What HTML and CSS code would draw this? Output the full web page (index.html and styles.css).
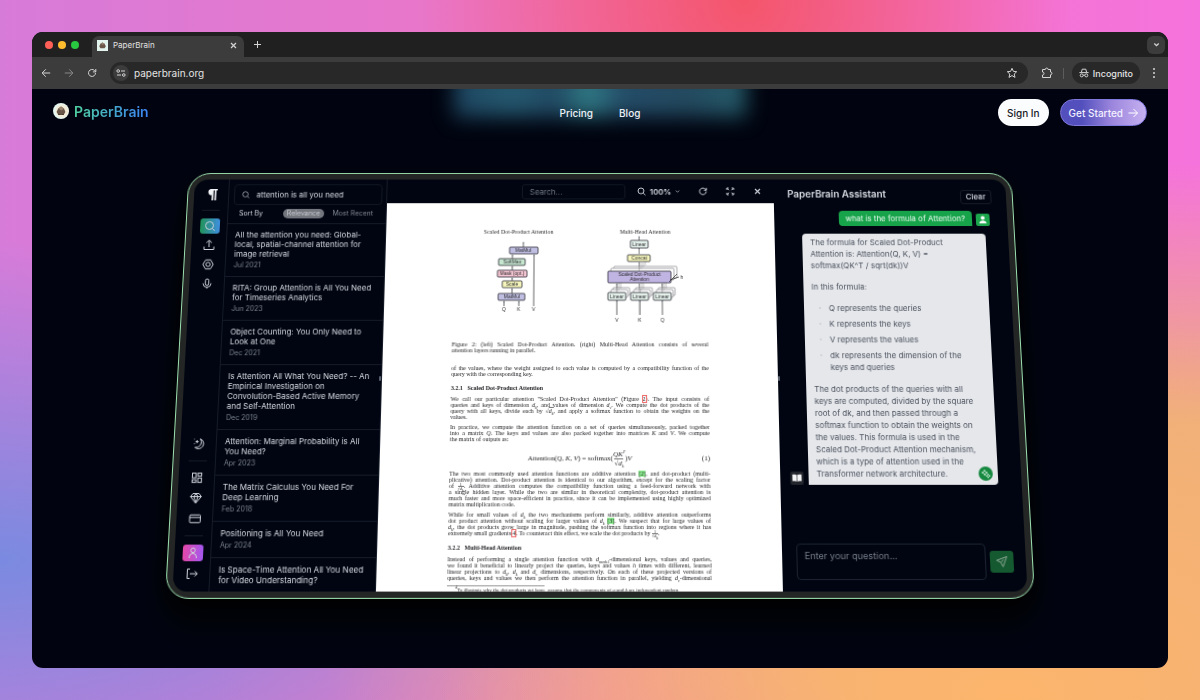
FILE: index.html
```html
<!DOCTYPE html>
<html lang="en">
<head>
    <meta charset="UTF-8">
    <meta name="viewport" content="width=device-width, initial-scale=1.0">
    <title>PaperBrain</title>
    <link rel="stylesheet" href="styles.css">
</head>
<body>
    <div class="browser">
        <!-- Tab strip -->
        <div class="tab-strip">
            <div class="lights"><i class="red"></i><i class="yellow"></i><i class="green"></i></div>
            <div class="tab">
                <svg class="favicon" viewBox="0 0 11 11"><rect width="11" height="11" fill="#e3f4ef"/><path d="M2.3 6.2 3.6 3.6 5.5 2.4 7.6 3.8 8.8 6.2 7.6 8.3H3.4z" fill="#6b5548"/><path d="M3.6 3.6 5.5 2.4 7.6 3.8 5.6 5z" fill="#94806d"/></svg>
                <span>PaperBrain</span>
                <button class="plain" aria-label="Close tab"><svg width="7" height="7" viewBox="0 0 7 7"><path d="M1 1l5 5M6 1L1 6" stroke-width="1.2"/></svg></button>
            </div>
            <button class="plain new-tab" aria-label="New tab"><svg width="9" height="9" viewBox="0 0 9 9"><path d="M4.500 1v7M1 4.500h7"/></svg></button>
            <button class="tab-search" aria-label="Search tabs"><svg width="7" height="7" viewBox="0 0 7 7"><path d="M1.300 2.500l2.200 2.200 2.200-2.200" stroke-width="1.300"/></svg></button>
        </div>

        <!-- Address bar -->
        <div class="toolbar">
            <button class="plain" aria-label="Back"><svg width="10" height="10" viewBox="0 0 10 10"><path d="M9.200 5H1.200M4.800 1.300L1.100 5l3.700 3.700"/></svg></button>
            <button class="plain dim" aria-label="Forward"><svg width="10" height="10" viewBox="0 0 10 10"><path d="M.8 5h8M5.200 1.300L8.900 5 5.200 8.700"/></svg></button>
            <button class="plain" aria-label="Reload"><svg width="10" height="10" viewBox="0 0 10 10"><path d="M8.500 5a3.500 3.500 0 1 1-1-2.500L8.700 3.700M8.800 1v2.900H5.900"/></svg></button>
            <div class="omnibox">
                <button class="site-info" aria-label="Site information"><svg width="10" height="8" viewBox="0 0 10 8"><circle cx="2.200" cy="2" r="1.300"/><path d="M5 2h4M1 6h4"/><circle cx="7.800" cy="6" r="1.300"/></svg></button>
                <input type="text" value="paperbrain.org" aria-label="Address">
                <button class="plain" aria-label="Bookmark"><svg width="12" height="12" viewBox="0 0 12 12"><path d="M6 1.300l1.400 3.100 3.300.3-2.500 2.300.8 3.400L6 8.600l-3 1.800.8-3.400L1.300 4.700l3.300-.3z"/></svg></button>
            </div>
            <button class="plain ext" aria-label="Extensions"><svg width="12" height="12" viewBox="0 0 12 12"><path d="M1.500 2.500h2.800a1.400 1.400 0 0 1 2.800 0h2.400V5a1.400 1.400 0 0 1 0 2.800v2.700h-8V8a1.500 1.500 0 0 0 0-3z"/></svg></button>
            <span class="bar"></span>
            <div class="incognito">
                <svg width="10" height="10" viewBox="0 0 10 10"><path d="M2.500 4L3.200 1.200h3.600L7.500 4M.4 4.600h9.200"/><circle cx="2.700" cy="7.400" r="1.500"/><circle cx="7.300" cy="7.400" r="1.500"/><path d="M4.200 7.200h1.600"/></svg>
                Incognito
            </div>
            <button class="plain" aria-label="Menu"><svg width="10" height="12" viewBox="0 0 10 12"><g fill="#d4d4d4" stroke="none"><circle cx="5" cy="2" r="1"/><circle cx="5" cy="6" r="1"/><circle cx="5" cy="10" r="1"/></g></svg></button>
        </div>

        <!-- Site -->
        <div class="page">
            <div class="glow"></div>
            <nav class="site-nav">
                <a class="brand" href="#">
                    <svg width="16" height="16" viewBox="0 0 16 16"><circle cx="8" cy="8" r="8" fill="#e6f6f0"/><circle cx="9" cy="8" r="6.500" fill="#f3ecd9"/><path d="M3.600 9l1.600-3.600L8 3.600l3 1.800L12.400 9l-1.800 3H5.400z" fill="#6a5549"/><path d="M5.200 5.400L8 3.600l3 1.800-2.600 2z" fill="#98846f"/><path d="M5 10.200l3 1.800 3-1.400-.4 1.400H5.400z" fill="#453730"/></svg>
                    <span>PaperBrain</span>
                </a>
                <div class="nav-links"><a href="#">Pricing</a><a href="#">Blog</a></div>
                <div class="nav-actions">
                    <button class="sign-in">Sign In</button>
                    <button class="get-started">Get Started <svg width="10" height="10" viewBox="0 0 10 10"><path d="M.5 5h9M5.500 1l4 4-4 4"/></svg></button>
                </div>
            </nav>

            <div class="stage">
                <div class="card">
                    <div class="app">
                        <!-- Icon rail -->
                        <div class="rail">
                            <svg class="pilcrow" viewBox="0 0 20 20"><path d="M9 4h7v1.500h-1.300V16H13V5.500h-1.200V16H10v-5.500A3.300 3.300 0 0 1 9 4z" fill="#f1f3f6" stroke="none"/></svg>
                            <hr>
                            <button class="tile search" aria-label="Search papers"><svg viewBox="0 0 20 20"><circle cx="9.500" cy="9.500" r="4"/><path d="M12.500 12.500l2.500 2.500"/></svg></button>
                            <button class="tile" aria-label="Upload"><svg viewBox="0 0 20 20"><path d="M10 12V5M7.200 7.500L10 4.800l2.800 2.700M5 11.500v3h10v-3"/></svg></button>
                            <button class="tile" aria-label="Settings"><svg viewBox="0 0 20 20"><path d="M7.500 5.300h5L15.200 10l-2.700 4.700h-5L4.800 10z" stroke-linejoin="round"/><circle cx="10" cy="10" r="2.200"/></svg></button>
                            <button class="tile" aria-label="Voice"><svg viewBox="0 0 20 20"><rect x="8.300" y="5" width="3.400" height="6.500" rx="1.700"/><path d="M6 9.500a4 4 0 0 0 8 0M10 13.500V15"/></svg></button>
                            <button class="tile push" aria-label="Dark mode"><svg viewBox="0 0 20 20"><path d="M11.500 4.800a5 5 0 1 1-5 8.400 5.200 5.200 0 0 0 5-8.400z"/><path d="M8.300 6v3M6.800 7.500h3M5.500 9.500h.8M5.500 5h.6"/></svg></button>
                            <hr>
                            <button class="tile" aria-label="Dashboard"><svg viewBox="0 0 20 20"><rect x="5.500" y="5.500" width="3.600" height="4.600"/><rect x="11" y="5.500" width="3.600" height="2.800"/><rect x="5.500" y="12" width="3.600" height="2.600"/><rect x="11" y="10.300" width="3.600" height="4.300"/></svg></button>
                            <button class="tile" aria-label="Plans"><svg viewBox="0 0 20 20"><path d="M7 5.500h6L15.300 8.500 10 14.800 4.700 8.500zM4.700 8.500h10.600M8 8.500l2 6 2-6-2-3z" stroke-linejoin="round"/></svg></button>
                            <button class="tile" aria-label="Billing"><svg viewBox="0 0 20 20"><rect x="5" y="6.300" width="10.500" height="7.500" rx="1"/><path d="M5 8.800h10.500"/></svg></button>
                            <hr>
                            <button class="tile profile" aria-label="Profile"><svg viewBox="0 0 20 20"><circle cx="10" cy="7.500" r="2.200"/><path d="M6.500 15v-1a3.500 3.500 0 0 1 7 0v1"/></svg></button>
                            <button class="tile" aria-label="Log out"><svg viewBox="0 0 20 20"><path d="M8 5.500H5.500v9H8M8 10h7M12.800 7.500l2.500 2.500-2.500 2.500"/></svg></button>
                        </div>

                        <!-- Paper list -->
                        <div class="papers">
                            <label class="find">
                                <svg width="8" height="8" viewBox="0 0 8 8"><circle cx="3.600" cy="3.600" r="2.800"/><path d="M5.700 5.700l1.800 1.800"/></svg>
                                <input type="text" value="attention is all you need" aria-label="Search papers">
                            </label>
                            <div class="sort">
                                <span>Sort By</span>
                                <button class="on">Relevance</button>
                                <button>Most Recent</button>
                            </div>
                            <a class="paper" href="#">All the attention you need: Global-<br>local, spatial-channel attention for<br>image retrieval<small>Jul 2021</small></a>
                            <a class="paper" href="#">RITA: Group Attention is All You Need<br>for Timeseries Analytics<small>Jun 2023</small></a>
                            <a class="paper" href="#">Object Counting: You Only Need to<br>Look at One<small>Dec 2021</small></a>
                            <a class="paper" href="#">Is Attention All What You Need? -- An<br>Empirical Investigation on<br>Convolution-Based Active Memory<br>and Self-Attention<small>Dec 2019</small></a>
                            <a class="paper" href="#">Attention: Marginal Probability is All<br>You Need?<small>Apr 2023</small></a>
                            <a class="paper" href="#">The Matrix Calculus You Need For<br>Deep Learning<small>Feb 2018</small></a>
                            <a class="paper" href="#">Positioning is All You Need<small>Apr 2024</small></a>
                            <a class="paper" href="#">Is Space-Time Attention All You Need<br>for Video Understanding?</a>
                        </div>

                        <!-- PDF viewer -->
                        <div class="viewer">
                            <div class="viewer-bar">
                                <input type="text" placeholder="Search..." aria-label="Search in document">
                                <label class="zoom">
                                    <svg width="9" height="9" viewBox="0 0 9 9"><circle cx="4" cy="4" r="3"/><path d="M6.200 6.200l2.300 2.300"/></svg>
                                    <select aria-label="Zoom"><option>100%</option></select>
                                    <svg class="chev" width="5" height="5" viewBox="0 0 5 5"><path d="M.8 1.600l1.700 1.700 1.700-1.700" stroke-width=".7"/></svg>
                                </label>
                                <button class="plain" aria-label="Rotate"><svg width="9" height="9" viewBox="0 0 9 9"><path d="M7.900 4.500a3.400 3.400 0 1 1-1.200-2.600L8 3.100M8.100 .8v2.500H5.600"/></svg></button>
                                <button class="plain" aria-label="Full screen"><svg width="9" height="9" viewBox="0 0 9 9"><path d="M1 3V1h2M6 1h2v2M8 6v2H6M3 8H1V6M1.200 1.200l2 2M7.800 1.200l-2 2M7.800 7.800l-2-2M1.200 7.800l2-2"/></svg></button>
                                <button class="plain" aria-label="Close"><svg width="9" height="9" viewBox="0 0 9 9"><path d="M2 2l5 5M7 2L2 7" stroke-width="1.200"/></svg></button>
                            </div>
                            <div class="sheet">
                                <svg class="figure" viewBox="0 0 258 110">
                                    <defs><marker id="tip" viewBox="0 0 4 4" refX="3" refY="2" markerWidth="3" markerHeight="3" orient="auto"><path d="M0 0l4 2-4 2z" fill="#222"/></marker></defs>
                                    <g class="serif"><text x="66" y="8">Scaled Dot-Product Attention</text><text x="195" y="8">Multi-Head Attention</text></g>
                                    <g class="wires">
                                        <path d="M71 22v-5" marker-end="url(#tip)"/><path d="M60 34v-4" marker-end="url(#tip)"/><path d="M60 46v-4" marker-end="url(#tip)"/><path d="M60 58v-4" marker-end="url(#tip)"/><path d="M60 70v-5" marker-end="url(#tip)"/><path d="M52 83v-5" marker-end="url(#tip)"/><path d="M67 83v-5" marker-end="url(#tip)"/><path d="M82 83V30" marker-end="url(#tip)"/>
                                        <path d="M189 15v-4" marker-end="url(#tip)"/><path d="M189 29v-6" marker-end="url(#tip)"/><path d="M189 47v-9" marker-end="url(#tip)"/><path d="M166 69v-9" marker-end="url(#tip)"/><path d="M189 69v-9" marker-end="url(#tip)"/><path d="M212 69v-9" marker-end="url(#tip)"/><path d="M166 92V77" marker-end="url(#tip)"/><path d="M189 92V77" marker-end="url(#tip)"/><path d="M212 92V77" marker-end="url(#tip)"/>
                                    </g>
                                    <g class="wires faint"><path d="M191 45v-7M193 43v-5M195 41v-4M168 67v-8M170 65v-6M191 67v-8M193 65v-6M214 67v-8M216 65v-6"/></g>
                                    <g class="boxes">
                                        <rect x="57" y="22" width="29" height="7" rx="1" fill="#c0bfe2"/><rect x="46" y="34" width="27" height="7" rx="1" fill="#c6e6d0"/><rect x="45" y="46" width="30" height="7" rx="1" fill="#f5c5d2"/><rect x="50" y="57" width="20" height="7" rx="1" fill="#f4f4bb"/><rect x="46" y="70" width="27" height="7" rx="1" fill="#c0bfe2"/>
                                        <rect x="180" y="15" width="18" height="8" rx="1" fill="#e4f0ea"/><rect x="177" y="30" width="23" height="7" rx="1" fill="#f4f4bb"/>
                                        <g opacity=".5"><rect x="163" y="42" width="64" height="12" rx="1" fill="#fff"/><rect x="160" y="44" width="64" height="12" rx="1" fill="#fff"/></g>
                                        <rect x="157" y="47" width="64" height="12" rx="1" fill="#c0b5e2"/>
                                        <g opacity=".5"><rect x="162" y="64" width="17" height="8" rx="1" fill="#fff"/><rect x="160" y="66" width="17" height="8" rx="1" fill="#fff"/><rect x="185" y="64" width="17" height="8" rx="1" fill="#fff"/><rect x="183" y="66" width="17" height="8" rx="1" fill="#fff"/><rect x="208" y="64" width="17" height="8" rx="1" fill="#fff"/><rect x="206" y="66" width="17" height="8" rx="1" fill="#fff"/></g>
                                        <rect x="157" y="69" width="18" height="8" rx="1" fill="#e4f0ea"/><rect x="180" y="69" width="18" height="8" rx="1" fill="#e4f0ea"/><rect x="203" y="69" width="18" height="8" rx="1" fill="#e4f0ea"/>
                                    </g>
                                    <path class="wires" d="M219 58l8-8M220 56l9-3"/>
                                    <g class="sans">
                                        <text x="71" y="27">MatMul</text><text x="60" y="39">SoftMax</text><text x="60" y="51">Mask (opt.)</text><text x="60" y="62">Scale</text><text x="60" y="75">MatMul</text><text x="52" y="88">Q</text><text x="67" y="88">K</text><text x="82" y="88">V</text>
                                        <text x="189" y="21">Linear</text><text x="189" y="35">Concat</text><text x="189" y="52">Scaled Dot-Product</text><text x="189" y="57">Attention</text><text x="166" y="75">Linear</text><text x="189" y="75">Linear</text><text x="212" y="75">Linear</text><text x="166" y="99">V</text><text x="189" y="99">K</text><text x="212" y="99">Q</text><text x="232" y="55">h</text>
                                    </g>
                                </svg>

                                <p class="caption"><span>Figure 2: (left) Scaled Dot-Product Attention. (right) Multi-Head Attention consists of several</span>attention layers running in parallel.</p>
                                <p><span>of the values, where the weight assigned to each value is computed by a compatibility function of the</span>query with the corresponding key.</p>
                                <h3>3.2.1 &nbsp; Scaled Dot-Product Attention</h3>
                                <p><span>We call our particular attention "Scaled Dot-Product Attention" (Figure <a class="ref red" href="#">2</a>). The input consists of</span><span>queries and keys of dimension <i>d<sub>k</sub></i>, and values of dimension <i>d<sub>v</sub></i>. We compute the dot products of the</span><span>query with all keys, divide each by √<b class="root"><i>d<sub>k</sub></i></b>, and apply a softmax function to obtain the weights on the</span>values.</p>
                                <p><span>In practice, we compute the attention function on a set of queries simultaneously, packed together</span><span>into a matrix <i>Q</i>. The keys and values are also packed together into matrices <i>K</i> and <i>V</i>. We compute</span>the matrix of outputs as:</p>
                                <div class="formula">
                                    <div>Attention(<i>Q</i>, <i>K</i>, <i>V</i>) = softmax(<b class="frac"><i>QK<sup>T</sup></i><em>√<b class="root"><i>d<sub>k</sub></i></b></em></b>)<i>V</i></div>
                                    <small>(1)</small>
                                </div>
                                <p><span>The two most commonly used attention functions are additive attention <a class="ref green" href="#">[2]</a>, and dot-product (multi-</span><span>plicative) attention. Dot-product attention is identical to our algorithm, except for the scaling factor</span><span>of <b class="frac tiny"><em>1</em><em>√<b class="root"><i>d<sub>k</sub></i></b></em></b>. Additive attention computes the compatibility function using a feed-forward network with</span><span>a single hidden layer. While the two are similar in theoretical complexity, dot-product attention is</span><span>much faster and more space-efficient in practice, since it can be implemented using highly optimized</span>matrix multiplication code.</p>
                                <p><span>While for small values of <i>d<sub>k</sub></i> the two mechanisms perform similarly, additive attention outperforms</span><span>dot product attention without scaling for larger values of <i>d<sub>k</sub></i> <a class="ref green" href="#">[3]</a>. We suspect that for large values of</span><span><i>d<sub>k</sub></i>, the dot products grow large in magnitude, pushing the softmax function into regions where it has</span>extremely small gradients <a class="ref red" href="#">4</a>. To counteract this effect, we scale the dot products by <b class="frac tiny"><em>1</em><em>√<b class="root"><i>d<sub>k</sub></i></b></em></b>.</p>
                                <h3>3.2.2 &nbsp; Multi-Head Attention</h3>
                                <p><span>Instead of performing a single attention function with <i>d</i><sub>model</sub>-dimensional keys, values and queries,</span><span>we found it beneficial to linearly project the queries, keys and values <i>h</i> times with different, learned</span><span>linear projections to <i>d<sub>k</sub></i>, <i>d<sub>k</sub></i> and <i>d<sub>v</sub></i> dimensions, respectively. On each of these projected versions of</span><span>queries, keys and values we then perform the attention function in parallel, yielding <i>d<sub>v</sub></i>-dimensional</span></p>
                                <p class="footnote"><sup>4</sup>To illustrate why the dot products get large, assume that the components of <i>q</i> and <i>k</i> are independent random</p>
                            </div>
                        </div>

                        <!-- Assistant -->
                        <div class="chat">
                            <div class="chat-head"><h2>PaperBrain Assistant</h2><button class="clear">Clear</button></div>
                            <div class="asked">
                                <div class="question">what is the formula of Attention?</div>
                                <svg width="14" height="13" viewBox="0 0 14 13"><rect width="14" height="13" rx="2" fill="#1ba54c"/><circle cx="7" cy="4.500" r="2" fill="#fff"/><path d="M3.300 10.300c0-4 7.400-4 7.400 0z" fill="#fff"/></svg>
                            </div>
                            <div class="replied">
                                <svg width="13" height="13" viewBox="0 0 13 13"><rect width="13" height="13" rx="2" fill="#23262d"/><path d="M2 3c1.500-.5 3-.5 4.200.3v6.500C5 9 3.500 9 2 9.500zM11 3c-1.500-.5-3-.5-4.200.3v6.500C8 9 9.500 9 11 9.500z" fill="#f3f4f6"/></svg>
                                <div class="answer">
                                    <p>The formula for Scaled Dot-Product<br>Attention is: Attention(Q, K, V) =<br>softmax(QK^T / sqrt(dk))V</p>
                                    <p>In this formula:</p>
                                    <ul>
                                        <li>Q represents the queries</li>
                                        <li>K represents the keys</li>
                                        <li>V represents the values</li>
                                        <li>dk represents the dimension of the<br>keys and queries</li>
                                    </ul>
                                    <p>The dot products of the queries with all<br>keys are computed, divided by the square<br>root of dk, and then passed through a<br>softmax function to obtain the weights on<br>the values. This formula is used in the<br>Scaled Dot-Product Attention mechanism,<br>which is a type of attention used in the<br>Transformer network architecture.</p>
                                    <svg class="spark" width="14" height="14" viewBox="0 0 14 14"><circle cx="7" cy="7" r="7" fill="#16883f"/><path d="M6 3.300l.8 1.900 2 .8-2 .8L6 8.800l-.8-2-2-.8 2-.8zM9.300 7.200l.6 1.400 1.400.6-1.400.6-.6 1.400-.6-1.400-1.400-.6 1.400-.6z" fill="none" stroke="#d6f5e0" stroke-width=".8"/></svg>
                                </div>
                            </div>
                            <form class="ask">
                                <textarea placeholder="Enter your question..." aria-label="Enter your question"></textarea>
                                <button class="send" type="button" aria-label="Send"><svg width="13" height="13" viewBox="0 0 13 13"><path d="M11.500 1.500L1.500 5.200l4 1.900 2 4.200zM5.500 7.100l3-2.800" stroke-linejoin="round"/></svg></button>
                            </form>
                        </div>
                    </div>
                </div>
            </div>
        </div>
    </div>
</body>
</html>
```

FILE: styles.css
```css
* {
    box-sizing: border-box;
}
body {
    margin: 0;
    padding: 32px;
    height: 100vh;
    font-family: Inter, "Liberation Sans", sans-serif;
    background:
        radial-gradient(circle at 62% 0%, #f4556a 0%, rgba(244,85,106,0) 32%),
        radial-gradient(ellipse at 84% 100%, #fdb56c 0%, rgba(253,181,108,0) 40%),
        radial-gradient(ellipse at 100% 88%, #edaf7c 22%, rgba(237,175,124,0) 52%),
        radial-gradient(ellipse at 0% 80%, #7a8ae0 0%, rgba(122,138,224,0) 40%),
        radial-gradient(circle at 42% 105%, #f07fc0 0%, rgba(240,127,192,0) 30%),
        linear-gradient(90deg, #d77bd9, #ef75c4 50%, #f573dc);
}
button, input, select, textarea {
    font-family: inherit;
    color: inherit;
    padding: 0;
    margin: 0;
    border: none;
    background: none;
    outline: none;
}
a {
    color: inherit;
    text-decoration: none;
}
svg {
    display: block;
    flex: none;
    fill: none;
    stroke: #d4d4d4;
    stroke-width: 1;
}
.plain {
    display: flex;
}

/* browser chrome */
.browser {
    height: 100%;
    display: flex;
    flex-direction: column;
    border-radius: 11px;
    overflow: hidden;
    background: #010410;
}
.tab-strip {
    height: 25px;
    padding: 0 3px 0 13px;
    display: flex;
    align-items: center;
    background: #202020;
}
.lights {
    display: flex;
    gap: 5px;
    margin-right: 13px;
}
.lights i {
    width: 8px;
    height: 8px;
    border-radius: 50%;
}
.lights .red { background: #fe5f57; }
.lights .yellow { background: #febb2e; }
.lights .green { background: #28c840; }
.tab {
    align-self: flex-end;
    width: 152px;
    height: 21px;
    padding: 0 7px 3px 5px;
    display: flex;
    align-items: center;
    gap: 5px;
    border-radius: 7px 7px 0 0;
    background: #3c3c3c;
    color: #e2e2e2;
    font-size: 8px;
}
.tab span {
    flex: 1;
}
.favicon {
    width: 11px;
    height: 11px;
    stroke: none;
}
.new-tab {
    margin-left: 9px;
}
.tab-search {
    width: 18px;
    height: 18px;
    margin-left: auto;
    display: flex;
    align-items: center;
    justify-content: center;
    border-radius: 6px;
    background: #3c3c3c;
}
.toolbar {
    height: 32px;
    padding: 0 9px;
    display: flex;
    align-items: center;
    gap: 13px;
    background: #3c3c3c;
    color: #e4e4e4;
    font-size: 10px;
}
.dim {
    opacity: .5;
}
.omnibox {
    flex: 1;
    height: 22px;
    padding: 0 10px 0 3px;
    display: flex;
    align-items: center;
    gap: 5px;
    border-radius: 11px;
    background: #282828;
}
.omnibox input {
    flex: 1;
    font-size: 10px;
}
.site-info {
    width: 16px;
    height: 16px;
    display: flex;
    align-items: center;
    justify-content: center;
    border-radius: 50%;
    background: #3c3c3c;
}
.ext {
    margin-right: -3px;
}
.bar {
    width: 1px;
    height: 11px;
    margin-right: -5px;
    background: #5c5c5c;
}
.incognito {
    height: 22px;
    padding: 0 7px;
    display: flex;
    align-items: center;
    gap: 4px;
    margin-right: -4px;
    border-radius: 11px;
    background: #282828;
    font-weight: 500;
    font-size: 9px;
}

/* site */
.page {
    position: relative;
    flex: 1;
    min-height: 0;
    display: flex;
    flex-direction: column;
    overflow: hidden;
}
.glow {
    position: absolute;
    top: -20px;
    left: 50%;
    width: 292px;
    height: 48px;
    margin-left: -146px;
    filter: blur(10px);
    background: linear-gradient(90deg, #1d4560, #24586f 20%, #204862 35%, #2f7a85 46%, #234b67 58%, #23495f 80%, #245a68);
}
.site-nav {
    position: relative;
    padding: 10px 21px;
    display: grid;
    grid-template-columns: 1fr auto 1fr;
    align-items: center;
}
.brand {
    display: flex;
    align-items: center;
    gap: 5px;
    padding-bottom: 3px;
    font-size: 14px;
    font-weight: 600;
}
.brand span {
    background: linear-gradient(90deg, #4fd0a0, #3b82f6);
    -webkit-background-clip: text;
    background-clip: text;
    color: transparent;
}
.brand svg {
    stroke: none;
}
.nav-links {
    display: flex;
    gap: 26px;
    color: #eef2f7;
    font-size: 10px;
    font-weight: 500;
}
.nav-actions {
    display: flex;
    justify-content: flex-end;
    gap: 11px;
    font-weight: 500;
}
.nav-actions button {
    height: 27px;
    padding: 0 9px;
    border-radius: 14px;
    font-size: 10px;
    font-weight: 500;
}
.sign-in {
    background: #fbfcfe;
    color: #16181f;
}
.nav-actions .get-started {
    display: flex;
    align-items: center;
    gap: 5px;
    padding: 0 8px;
    border: 1px solid #7f78dd;
    background: linear-gradient(90deg, #5350bd 25%, #9c86dd 60%, #c6b1f1);
    color: #f2f0ff;
}
.get-started svg {
    stroke: #fff;
}

/* tilted preview */
.stage {
    flex: 1;
    min-height: 0;
    padding: 30px 145px 74px;
    display: flex;
    perspective: 800px;
    perspective-origin: 50% 244px;
}
.card {
    flex: 1;
    min-width: 0;
    padding: 6px;
    display: flex;
    border: 1px solid #9be0ae;
    border-radius: 23px;
    background: #242625;
    transform: rotateX(6deg);
    box-shadow: 0 8px 20px #000, 0 28px 30px rgba(0,0,0,.6);
}
.app {
    flex: 1;
    min-width: 0;
    display: grid;
    grid-template-columns: 36px 162px 1fr 238px;
    grid-template-rows: 100%;
    overflow: hidden;
    border-radius: 14px;
    background: #010511;
    color: #d5d9e0;
}
.app svg {
    stroke: #cdd2da;
}
.rail {
    padding: 6px 0 7px;
    display: flex;
    flex-direction: column;
    align-items: center;
    border-right: 1px solid #151b28;
}
.rail hr {
    width: 18px;
    margin: 6px 0;
    border: none;
    border-top: 1px solid #151b28;
}
.pilcrow, .tile, .tile svg {
    width: 20px;
    height: 20px;
}
.tile.search, .tile.profile {
    height: 16px;
    margin: 2px 0;
    display: flex;
    align-items: center;
    justify-content: center;
    border-radius: 3px;
}
.tile.search {
    background: linear-gradient(90deg, #22935a, #3f8fe0);
}
.tile.profile {
    background: linear-gradient(90deg, #e548a8, #a457f0);
}
.push {
    margin-top: auto;
}

/* paper list */
.papers {
    position: relative;
    min-width: 0;
    overflow: hidden;
    padding-top: 5px;
    border-right: 1px solid #151b28;
}
/* resize grips */
.papers::after, .chat::before {
    content: "";
    position: absolute;
    top: 49%;
    width: 2px;
    height: 5px;
    border-radius: 1px;
    background: #596070;
}
.papers::after {
    right: 0;
}
.chat::before {
    left: 0;
}
.find {
    height: 22px;
    margin: 0 4px 0 5px;
    padding: 0 7px;
    display: flex;
    align-items: center;
    gap: 7px;
    border: 1px solid #111724;
    border-radius: 4px;
}
.find input {
    width: 100%;
    font-size: 8px;
}
.app .find svg {
    stroke: #8a919d;
}
.sort {
    height: 20px;
    padding: 0 13px 2px 11px;
    display: flex;
    align-items: center;
    justify-content: space-between;
    border-bottom: 1px solid #151b28;
    font-size: 7px;
}
.sort button {
    font-size: 7px;
    color: #828995;
}
.sort .on {
    height: 10px;
    padding: 0 4px;
    margin-left: 12px;
    border-radius: 5px;
    background: #74767e;
    color: #c9cbd1;
}
.paper {
    display: block;
    padding: 6px 8px;
    border-bottom: 1px solid #151b28;
    font-size: 8px;
    line-height: 10px;
    white-space: nowrap;
}
.paper small {
    display: block;
    margin-top: 2px;
    font-size: 7px;
    color: #7b828f;
}

/* pdf viewer */
.viewer {
    min-width: 0;
    display: flex;
    flex-direction: column;
    overflow: hidden;
}
.viewer-bar {
    height: 25px;
    padding: 0 12px;
    flex: none;
    display: flex;
    align-items: center;
    justify-content: flex-end;
    gap: 19px;
    font-size: 8px;
}
.viewer-bar > input {
    width: 106px;
    height: 16px;
    padding: 0 7px;
    margin-right: -7px;
    border: 1px solid #111724;
    border-radius: 3px;
    font-size: 8px;
}
::placeholder {
    color: #737a87;
    opacity: 1;
}
.zoom {
    display: flex;
    align-items: center;
    gap: 4px;
}
.zoom select {
    appearance: none;
    font-size: 8px;
    font-weight: 600;
}
.sheet {
    flex: 1;
    padding: 24px 69px 0;
    overflow: hidden;
    background: #fff;
    color: #1c1c20;
    font-family: "Liberation Serif", serif;
    font-size: 6px;
    line-height: 6px;
}
.figure {
    width: 100%;
    margin-bottom: 9px;
}
.figure text {
    text-anchor: middle;
    stroke: none;
    fill: #2a2a2e;
}
.serif text {
    font-size: 6px;
}
.sans text {
    font-family: "Liberation Sans", sans-serif;
    font-size: 5px;
}
.app .wires {
    stroke: #222;
    stroke-width: .7;
}
.faint {
    opacity: .4;
}
.boxes rect {
    stroke: #2b2b35;
    stroke-width: .8;
}
.sheet p {
    margin: 0 0 4px;
    white-space: nowrap;
}
.sheet .caption {
    margin-bottom: 12px;
}
.sheet p span {
    display: block;
    text-align: justify;
    text-align-last: justify;
    white-space: normal;
    height: 6px;
}
.sheet h3 {
    margin: 8px 0 5px;
    font-size: 6px;
    line-height: 6px;
}
.sheet sub, .sheet sup {
    font-size: 4px;
    line-height: 0;
}
.sheet b.root, .sheet b.frac, .sheet em {
    font-weight: normal;
    font-style: normal;
}
.root {
    border-top: 1px solid #777;
}
.frac {
    display: inline-flex;
    flex-direction: column;
    align-items: center;
    vertical-align: middle;
}
.frac > :last-child {
    border-top: 1px solid #777;
}
.tiny {
    height: 6px;
    font-size: 4px;
    line-height: 3px;
    vertical-align: top;
}
.tiny .root {
    border: none;
}
.ref.red {
    outline: 1px solid #ee6a6a;
}
.ref.green {
    background: #8df08f;
}
.formula {
    height: 24px;
    margin: 2px 0 0;
    display: grid;
    grid-template-columns: 1fr auto 1fr;
    align-items: center;
    font-size: 7px;
    line-height: 8px;
}
.formula div {
    grid-column: 2;
}
.formula small {
    text-align: right;
    font-size: 7px;
}
.sheet .footnote {
    padding-left: 8px;
    font-size: 5px;
}
.footnote::before {
    content: "";
    display: block;
    width: 95px;
    margin: 2px 0 1px -8px;
    border-top: 1px solid #999;
}

/* assistant */
.chat {
    position: relative;
    padding: 10px 15px 11px 10px;
    display: flex;
    flex-direction: column;
}
.chat-head {
    display: flex;
    justify-content: space-between;
    align-items: center;
    padding-left: 4px;
}
.chat h2 {
    margin: 0 0 5px;
    font-size: 10px;
    line-height: 11px;
    font-weight: 600;
}
.clear {
    height: 15px;
    padding: 0 5px;
    border: 1px solid #151b28;
    border-radius: 3px;
    font-size: 8px;
    font-weight: 500;
}
.asked {
    margin: 7px 3px 8px 0;
    display: flex;
    justify-content: flex-end;
    align-items: flex-end;
    gap: 4px;
}
.question {
    padding: 0 7px;
    border-radius: 4px 4px 0 4px;
    background: #17a34a;
    color: #e7faee;
    font-size: 8px;
    line-height: 16px;
}
.app .asked svg, .app .replied > svg, .app .spark {
    stroke: none;
}
.replied {
    padding-right: 8px;
    display: flex;
    align-items: flex-end;
    gap: 5px;
}
.answer {
    position: relative;
    flex: 1;
    padding: 3px 0 5px 8px;
    border-radius: 4px 4px 4px 0;
    background: #e5e7eb;
    color: #4c525e;
    font-size: 8px;
    line-height: 12px;
    white-space: nowrap;
}
.answer p {
    margin: 0 0 10px;
}
.answer ul {
    margin: 0 0 10px;
    padding: 0 0 0 17px;
    list-style: none;
}
.answer li {
    margin-bottom: 4px;
    display: flex;
}
.answer li::before {
    content: "";
    flex: none;
    width: 2px;
    height: 2px;
    margin: 5px 8px 0 -10px;
    border-radius: 50%;
    background: #c9ccd2;
}
.answer p:last-of-type {
    margin: 0;
}
.spark {
    position: absolute;
    right: 5px;
    bottom: 4px;
}
.ask {
    margin-top: auto;
    padding-left: 4px;
    display: flex;
    align-items: center;
    gap: 4px;
    margin-right: -3px;
}
.ask textarea {
    flex: 1;
    min-width: 0;
    height: 35px;
    padding: 5px 7px;
    border: 1px solid #1b2130;
    border-radius: 4px;
    resize: none;
    font-size: 9px;
    line-height: 11px;
}
.send {
    width: 23px;
    height: 21px;
    display: flex;
    align-items: center;
    justify-content: center;
    border-radius: 3px;
    background: #14592f;
}
.app .send svg {
    stroke: #8aa694;
}
```
